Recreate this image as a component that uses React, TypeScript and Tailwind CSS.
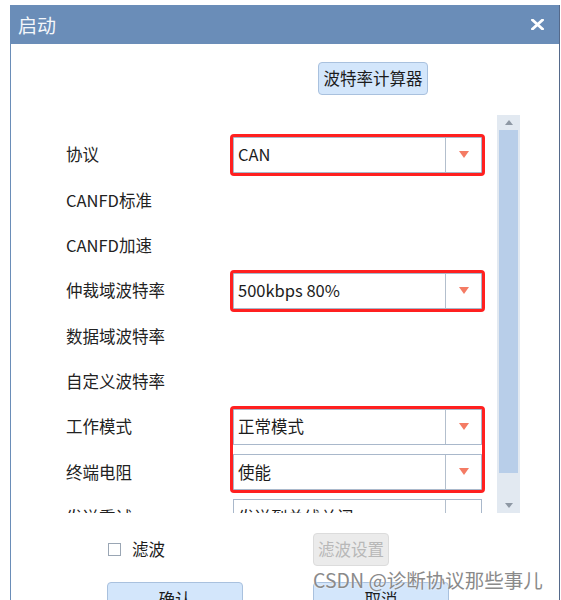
import React from "react";

const Arrow = () => (
  <svg width="10" height="7" viewBox="0 0 10 7">
    <polygon points="0,0 10,0 5,7" fill="#f47b64" />
  </svg>
);

const Combo = ({ text, red, group }: { text: string; red?: boolean; group?: boolean }) => (
  <div className="relative w-[249px] h-[36px] border border-[#a9b8cb] bg-white flex">
    <div className="flex-1 flex items-center pl-[4px] text-[16.5px] text-[#1c1c1c] leading-none">{text}</div>
    <div className="w-[36px] border-l border-[#b3bfcd] flex items-center justify-center">
      <Arrow />
    </div>
    {red && (
      <div
        className={
          group
            ? "absolute -left-[4px] -right-[4px] -top-[4px] -bottom-[49px] border-[3px] border-[#ff2020] rounded-[4px] pointer-events-none z-10"
            : "absolute -inset-[4px] border-[3px] border-[#ff2020] rounded-[4px] pointer-events-none"
        }
      />
    )}
  </div>
);

const rows: { label: string; combo?: string; red?: boolean; group?: boolean }[] = [
  { label: "协议", combo: "CAN", red: true },
  { label: "CANFD标准" },
  { label: "CANFD加速" },
  { label: "仲裁域波特率", combo: "500kbps 80%", red: true },
  { label: "数据域波特率" },
  { label: "自定义波特率" },
  { label: "工作模式", combo: "正常模式", red: true, group: true },
  { label: "终端电阻", combo: "使能" },
  { label: "发送重试", combo: "发送到总线关闭" },
];

export default function App() {
  return (
    <div className="relative w-[561px] h-[600px] overflow-hidden bg-white font-['Noto_Sans_CJK_SC',sans-serif]">
      <div className="ml-[10px] mt-[5px] w-[550px] h-[600px] flex flex-col border-r border-[#55698a]">
        <div className="h-[39px] shrink-0 bg-[#6a8db8] flex items-center justify-between pl-[8px] pr-[15px]">
          <span className="text-[19px] text-[#f4f7fb] leading-none">启动</span>
          <svg width="13" height="11" viewBox="0 0 13 11">
            <path d="M1.5 1 L11.5 10 M11.5 1 L1.5 10" stroke="#ffffff" strokeWidth="2.8" strokeLinecap="square" />
          </svg>
        </div>
        <div className="flex-1 border-l border-[#6a8db8] flex flex-col">
          <div className="pt-[18px] pl-[307px]">
            <div className="w-[110px] h-[33px] rounded-[4px] border border-[#a9c1de] bg-[#d3e6fb] flex items-center justify-center text-[16.5px] text-[#1c1c1c] leading-none">
              波特率计算器
            </div>
          </div>
          <div className="mt-[20px] h-[398px] flex shrink-0">
            <div className="w-[486px] overflow-hidden pt-[17px]">
              {rows.map((r) => (
                <div key={r.label} className="h-[45.33px] flex items-center">
                  <div className="w-[222px] pl-[55px] text-[16.5px] text-[#222] leading-none">{r.label}</div>
                  {r.combo && <Combo text={r.combo} red={r.red} group={r.group} />}
                </div>
              ))}
            </div>
            <div className="w-[23px] bg-[#e2e9f1] flex flex-col">
              <div className="h-[15px] flex items-center justify-center">
                <svg width="8" height="5" viewBox="0 0 8 5">
                  <polygon points="4,0 8,5 0,5" fill="#8e98a4" />
                </svg>
              </div>
              <div className="mx-[2px] h-[343px] bg-[#b8cee9]" />
              <div className="flex-1" />
              <div className="h-[15px] flex items-center justify-center">
                <svg width="8" height="5" viewBox="0 0 8 5">
                  <polygon points="0,0 8,0 4,5" fill="#8e98a4" />
                </svg>
              </div>
            </div>
          </div>
          <div className="mt-[20px] h-[33px] flex items-center">
            <div className="w-[302px] pl-[97px] flex items-center gap-[11px]">
              <div className="w-[13px] h-[13px] border border-[#9aa6b4] bg-white" />
              <span className="text-[16.5px] text-[#1c1c1c] leading-none">滤波</span>
            </div>
            <div className="w-[76px] h-[33px] rounded-[4px] border border-[#dcdcdc] bg-[#ebebeb] flex items-center justify-center text-[16.5px] text-[#b8b8b8] leading-none">
              滤波设置
            </div>
          </div>
          <div className="mt-[16px] flex pl-[96px]">
            <div className="w-[136px] h-[34px] rounded-[4px] border border-[#a9c1de] bg-[#d3e6fb] flex items-center justify-center text-[16.5px] text-[#1c1c1c] leading-none">
              确认
            </div>
            <div className="ml-[70px] w-[136px] h-[34px] rounded-[4px] border border-[#a9c1de] bg-[#d3e6fb] flex items-center justify-center text-[16.5px] text-[#1c1c1c] leading-none">
              取消
            </div>
          </div>
        </div>
      </div>
      <div className="absolute left-[313px] top-[567px] text-[19.5px] leading-[26px] text-[#8a8a8a] whitespace-nowrap [text-shadow:0_0_2px_#fff]">
        CSDN @诊断协议那些事儿
      </div>
    </div>
  );
}
